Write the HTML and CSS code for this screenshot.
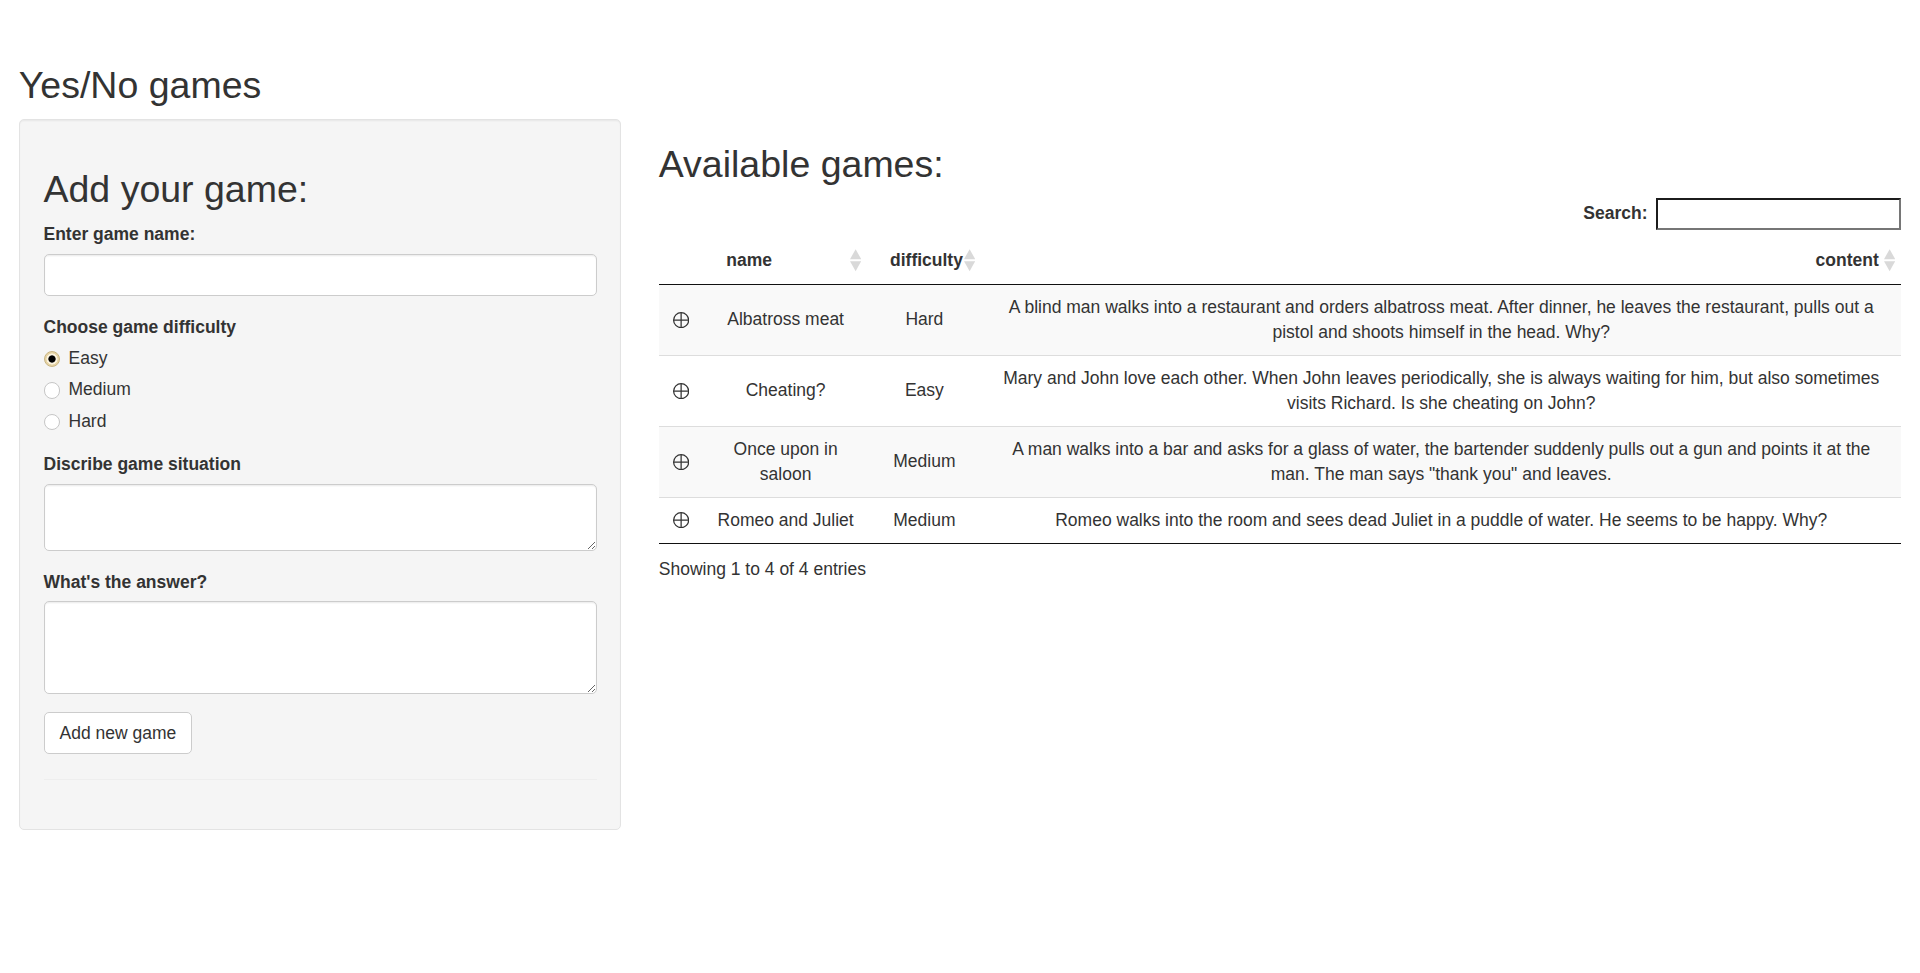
FILE: index.html
```html
<!DOCTYPE html>
<html lang="en">
<head>
<meta charset="utf-8">
<title>Yes/No games</title>
<link rel="stylesheet" href="styles.css">
</head>
<body>
<div class="page">
  <h2 class="title">Yes/No games</h2>
  <div class="layout">
    <div class="well">
      <h2 class="panel-title">Add your game:</h2>
      <div class="form-group">
        <label class="control-label" for="gname">Enter game name:</label>
        <input id="gname" type="text" class="form-control">
      </div>
      <div class="form-group">
        <label class="control-label">Choose game difficulty</label>
        <div class="options-group">
          <div class="radio"><label><input type="radio" name="diff" checked><span>Easy</span></label></div>
          <div class="radio"><label><input type="radio" name="diff"><span>Medium</span></label></div>
          <div class="radio"><label><input type="radio" name="diff"><span>Hard</span></label></div>
        </div>
      </div>
      <div class="form-group">
        <label class="control-label" for="gsit">Discribe game situation</label>
        <textarea id="gsit" class="form-control ta-2"></textarea>
      </div>
      <div class="form-group">
        <label class="control-label" for="gans">What's the answer?</label>
        <textarea id="gans" class="form-control ta-3"></textarea>
      </div>
      <button class="btn" type="button">Add new game</button>
      <hr class="sep">
    </div>
    <div class="main">
      <h2 class="panel-title">Available games:</h2>
      <div class="dt-wrapper">
        <div class="dt-filter">
          <label>Search:<input type="search" class="dt-search"></label>
        </div>
        <table class="dt">
          <thead>
            <tr>
              <th class="c0"></th>
              <th class="c1"><div class="th-inner"><span>name</span><svg class="sort" width="9" height="19" viewBox="5 0 9 19"><polygon points="5,9 9.5,1 14,9" fill="#d9d9d9"/><polygon points="5,10.5 9.5,18.5 14,10.5" fill="#d9d9d9"/></svg></div></th>
              <th class="c2"><div class="th-inner"><span>difficulty</span><svg class="sort" width="9" height="19" viewBox="5 0 9 19"><polygon points="5,9 9.5,1 14,9" fill="#d9d9d9"/><polygon points="5,10.5 9.5,18.5 14,10.5" fill="#d9d9d9"/></svg></div></th>
              <th class="c3"><div class="th-inner right"><span>content</span><svg class="sort" width="9" height="19" viewBox="5 0 9 19"><polygon points="5,9 9.5,1 14,9" fill="#d9d9d9"/><polygon points="5,10.5 9.5,18.5 14,10.5" fill="#d9d9d9"/></svg></div></th>
            </tr>
          </thead>
          <tbody>
            <tr class="odd">
              <td><svg class="oplus" width="13" height="13" viewBox="0 0 13 13"><circle cx="6.5" cy="6.5" r="6" fill="none" stroke="#333" stroke-width="1"/><path d="M0.5 6.5H12.5M6.5 0.5V12.5" stroke="#333" stroke-width="1"/></svg></td>
              <td>Albatross meat</td>
              <td>Hard</td>
              <td>A blind man walks into a restaurant and orders albatross meat. After dinner, he leaves the restaurant, pulls out a pistol and shoots himself in the head. Why?</td>
            </tr>
            <tr class="even">
              <td><svg class="oplus" width="13" height="13" viewBox="0 0 13 13"><circle cx="6.5" cy="6.5" r="6" fill="none" stroke="#333" stroke-width="1"/><path d="M0.5 6.5H12.5M6.5 0.5V12.5" stroke="#333" stroke-width="1"/></svg></td>
              <td>Cheating?</td>
              <td>Easy</td>
              <td>Mary and John love each other. When John leaves periodically, she is always waiting for him, but also sometimes visits Richard. Is she cheating on John?</td>
            </tr>
            <tr class="odd">
              <td><svg class="oplus" width="13" height="13" viewBox="0 0 13 13"><circle cx="6.5" cy="6.5" r="6" fill="none" stroke="#333" stroke-width="1"/><path d="M0.5 6.5H12.5M6.5 0.5V12.5" stroke="#333" stroke-width="1"/></svg></td>
              <td>Once upon in saloon</td>
              <td>Medium</td>
              <td>A man walks into a bar and asks for a glass of water, the bartender suddenly pulls out a gun and points it at the man. The man says "thank you" and leaves.</td>
            </tr>
            <tr class="even">
              <td><svg class="oplus" width="13" height="13" viewBox="0 0 13 13"><circle cx="6.5" cy="6.5" r="6" fill="none" stroke="#333" stroke-width="1"/><path d="M0.5 6.5H12.5M6.5 0.5V12.5" stroke="#333" stroke-width="1"/></svg></td>
              <td>Romeo and Juliet</td>
              <td>Medium</td>
              <td>Romeo walks into the room and sees dead Juliet in a puddle of water. He seems to be happy. Why?</td>
            </tr>
          </tbody>
        </table>
        <div class="dt-info">Showing 1 to 4 of 4 entries</div>
      </div>
    </div>
  </div>
</div>
</body>
</html>
```

FILE: styles.css
```css
* { box-sizing: border-box; }

html { zoom: 1.25; }

body {
  margin: 0;
  font-family: "Liberation Sans", Arial, Helvetica, sans-serif;
  font-size: 14px;
  line-height: 1.42857143;
  color: #333;
  background: #fff;
}

.page {
  padding: 32px 15px 0;
}

.title,
.panel-title {
  margin: 20px 0 10px;
  font-size: 30px;
  font-weight: 500;
  line-height: 1.1;
  color: #333;
}

.layout {
  display: grid;
  grid-template-columns: 482px 1fr;
  column-gap: 30px;
  align-items: start;
}

.well {
  min-height: 20px;
  padding: 19px;
  margin-bottom: 20px;
  background-color: #f5f5f5;
  border: 1px solid #e3e3e3;
  border-radius: 4px;
  box-shadow: inset 0 1px 1px rgba(0, 0, 0, 0.05);
}

.form-group {
  margin-bottom: 15px;
}

.control-label {
  display: inline-block;
  max-width: 100%;
  margin-bottom: 5px;
  font-weight: bold;
}

.form-control {
  display: block;
  width: 100%;
  height: 34px;
  padding: 6px 12px;
  font-family: inherit;
  font-size: 14px;
  line-height: 1.42857143;
  color: #555;
  background-color: #fff;
  border: 1px solid #ccc;
  border-radius: 4px;
  box-shadow: inset 0 1px 1px rgba(0, 0, 0, 0.075);
  margin: 0;
}

textarea.form-control { resize: both; }
.ta-2 { height: 54px; }
.ta-3 { height: 74px; }

.options-group {
  margin-top: -10px;
}

.radio {
  position: relative;
  display: block;
  margin: 10px 0;
}

.radio + .radio {
  margin-top: -5px;
}

.radio label {
  display: block;
  min-height: 20px;
  padding-left: 20px;
  margin-bottom: 0;
  font-weight: normal;
  cursor: pointer;
}

.radio input {
  -webkit-appearance: none;
  appearance: none;
  position: absolute;
  left: 0;
  top: 0;
  margin: 4px 0 0;
  width: 13px;
  height: 13px;
  border: 1px solid #c6c6c6;
  border-radius: 50%;
  background: #fff;
}

.radio input:checked {
  border-color: #c9b583;
  background: radial-gradient(circle at center, #000 0 2.6px, #fbf3df 3.2px 4.2px, #e6d4a6 4.6px);
}

.btn {
  display: inline-block;
  padding: 6px 12px;
  margin: 0;
  font-family: inherit;
  font-size: 14px;
  font-weight: normal;
  line-height: 1.42857143;
  color: #333;
  background-color: #fff;
  border: 1px solid #ccc;
  border-radius: 4px;
  cursor: pointer;
}

.sep {
  margin: 20px 0;
  border: 0;
  border-top: 1px solid #eee;
  height: 0;
}

.main {
  min-width: 0;
}

.dt-wrapper {
  position: relative;
}

.dt-filter {
  display: flex;
  justify-content: flex-end;
  height: 29px;
}

.dt-filter label {
  font-weight: bold;
  display: flex;
  align-items: center;
  height: 26px;
}

.dt-search {
  margin-left: 7px;
  width: 196px;
  height: 26px;
  padding: 1px 2px;
  font-family: inherit;
  font-size: 14px;
  line-height: 20px;
  border-width: 2px;
  border-style: solid;
  border-color: #1c1c1c #767676 #767676 #1c1c1c;
  background: #fff;
  -webkit-appearance: none;
  appearance: none;
}

.dt {
  width: 100%;
  table-layout: fixed;
  border-collapse: separate;
  border-spacing: 0;
  border-bottom: 1px solid #111;
}

.dt th {
  padding: 11px 0 9px 18px;
  font-weight: bold;
  text-align: left;
  border-bottom: 1px solid #111;
  vertical-align: middle;
}

.dt th.c0 { width: 36px; padding-left: 0; }
.dt th.c1 { width: 131px; }
.dt th.c2 { width: 91px; }

.th-inner {
  display: flex;
  align-items: center;
  height: 20px;
}

.th-inner .sort {
  flex: none;
  margin-left: auto;
  margin-right: 5px;
}

.th-inner.right {
  justify-content: flex-end;
}

.th-inner.right .sort {
  margin-left: 4px;
}

.dt td {
  padding: 8px 10px;
  text-align: center;
  vertical-align: middle;
  border-top: 1px solid #ddd;
}

.dt tbody tr:first-child td {
  border-top: none;
}

.dt tr.odd td {
  background-color: #f9f9f9;
}

.oplus {
  display: inline-block;
  vertical-align: -2px;
}

.dt-info {
  padding-top: 10.57px;
}
```
